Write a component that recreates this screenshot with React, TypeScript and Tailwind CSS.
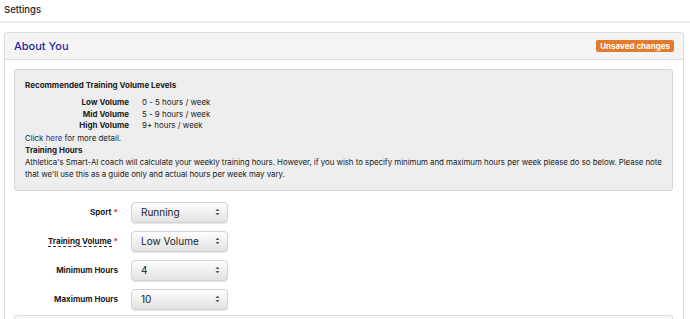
import React from 'react';

const font = { fontFamily: 'Inter, "Noto Sans", sans-serif' };

interface FieldRow {
  label: string;
  value: string;
  required?: boolean;
  hint?: boolean;
}

const fields: FieldRow[] = [
  { label: 'Sport', value: 'Running', required: true },
  { label: 'Training Volume', value: 'Low Volume', required: true, hint: true },
  { label: 'Minimum Hours', value: '4' },
  { label: 'Maximum Hours', value: '10' },
];

const levels = [
  ['Low Volume', '0 - 5 hours / week'],
  ['Mid Volume', '5 - 9 hours / week'],
  ['High Volume', '9+ hours / week'],
];

function FakeSelect({ value }: { value: string }) {
  return (
    <div className="flex h-[21px] w-[97px] items-center justify-between rounded-[4px] border border-[#d2d2d2] bg-gradient-to-b from-[#fefefe] to-[#e2e2e2] pl-[9px] pr-[7px] text-[10px] text-[#222] shadow-[0_1px_1px_rgba(0,0,0,0.1)]">
      <span>{value}</span>
      <svg width="5" height="8" viewBox="0 0 5 8">
        <path d="M0.5 3 L2.5 0.8 L4.5 3 Z" fill="#555" />
        <path d="M0.5 5 L2.5 7.2 L4.5 5 Z" fill="#555" />
      </svg>
    </div>
  );
}

export default function App() {
  return (
    <div className="min-h-screen bg-white text-[#222]" style={font}>
      <div className="h-[23px] border-b-2 border-[#ececec] px-[4px] pt-[3px] text-[9.5px] font-medium">
        Settings
      </div>

      <div className="ml-[4px] mr-[6px] mt-[9px] rounded-t-[3px] border border-b-0 border-[#dedede]">
        <div className="flex h-[27px] items-center justify-between border-b border-[#dedede] bg-[#f4f4f4] pl-[9px] pr-[9px]">
          <h2 className="text-[11px] font-medium text-[#1f2a9b]">About You</h2>
          <span className="rounded-[2px] bg-[#e37a2c] px-[4px] py-[1px] text-[8px] font-bold leading-[10px] text-white">
            Unsaved changes
          </span>
        </div>

        <div className="pl-[9px] pr-[10px] pt-[9px]">
          <div className="rounded-[3px] border border-[#d6d6d6] bg-[#eeeeee] pb-[10px] pl-[10px] pr-[2px] pt-[9px] text-[7.9px] leading-[12px]">
            <div className="mb-[6px] text-[8px] font-bold">Recommended Training Volume Levels</div>
            <div>
              {levels.map(([a, b]) => (
                <div key={a} className="flex leading-[11.5px]">
                  <div className="w-[104px] text-right text-[8px] font-bold">{a}</div>
                  <div className="pl-[13px]">{b}</div>
                </div>
              ))}
            </div>
            <div>
              Click <span className="text-[#2636b0]">here</span> for more detail.
            </div>
            <div className="text-[8px] font-bold">Training Hours</div>
            <p className="tracking-[-0.04px]">
              Athletica's Smart-AI coach will calculate your weekly training hours. However, if you wish to specify minimum and maximum hours per week please do so below. Please note that we'll use this as a guide only and actual hours per week may vary.
            </p>
          </div>

          <div className="flex flex-col gap-[8px] pt-[11px]">
            {fields.map((f) => (
              <div key={f.label} className="flex items-center">
                <div className="w-[104px] text-right text-[8px] font-bold">
                  <span className={f.hint ? 'border-b border-dashed border-[#333]' : ''}>{f.label}</span>
                  {f.required ? <span className="ml-[2px] text-[#d9342b]">*</span> : null}
                </div>
                <div className="ml-[13px]">
                  <FakeSelect value={f.value} />
                </div>
              </div>
            ))}
          </div>

          <div className="mt-[5px] h-[8px] rounded-t-[3px] border border-b-0 border-[#dedede] bg-[#f6f6f6]" />
        </div>
      </div>
    </div>
  );
}
